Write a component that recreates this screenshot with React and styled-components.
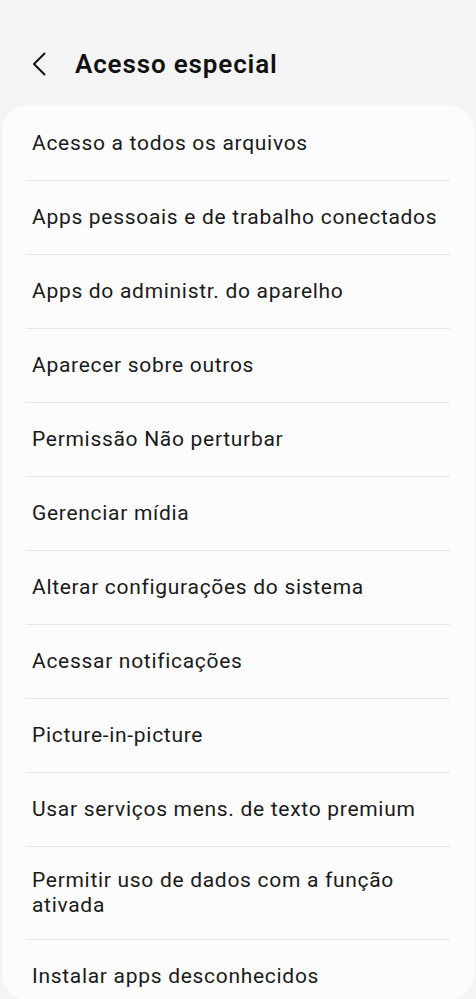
import React from "react";
import styled, { createGlobalStyle } from "styled-components";

const Global = createGlobalStyle`
  html, body { margin: 0; padding: 0; background: #f4f4f4; }
  body { font-family: Roboto, "Noto Sans", Arial, sans-serif; -webkit-font-smoothing: antialiased; }
`;

const Page = styled.div`
  width: 476px;
  height: 999px;
  overflow: hidden;
  background: #f4f4f4;
  display: flex;
  flex-direction: column;
`;

const Header = styled.header`
  height: 105px;
  flex: 0 0 105px;
  display: flex;
  align-items: center;
  padding: 23px 0 0 32px;
  box-sizing: border-box;
  gap: 21px;
`;

const BackButton = styled.button`
  width: 22px;
  height: 26px;
  padding: 0;
  border: none;
  background: none;
  display: flex;
  align-items: center;
  justify-content: flex-start;
  color: #111;
`;

const Title = styled.h1`
  margin: 0;
  font-size: 26px;
  font-weight: 600;
  color: #111;
  letter-spacing: 0.85px;
`;

const Card = styled.ul`
  list-style: none;
  margin: 0 2px;
  padding: 1px 0 0;
  background: #fcfcfc;
  border-radius: 26px;
  height: 895px;
  flex: 0 0 895px;
  box-sizing: border-box;
  overflow: hidden;
`;

const Row = styled.li`
  min-height: 74px;
  box-sizing: border-box;
  padding: ${(p) => (p.$first ? "21px" : "22px")} 24px 21px 30px;
  display: flex;
  align-items: center;
  font-size: 21px;
  line-height: 25px;
  letter-spacing: 0.7px;
  color: #1a1a1a;
  position: relative;
  ${(p) =>
    p.$first
      ? ""
      : `&::before {
    content: "";
    position: absolute;
    top: 0;
    left: 24px;
    right: 24px;
    height: 1px;
    background: #e6e6e6;
  }`}
`;

const items = [
  "Acesso a todos os arquivos",
  "Apps pessoais e de trabalho conectados",
  "Apps do administr. do aparelho",
  "Aparecer sobre outros",
  "Permissão Não perturbar",
  "Gerenciar mídia",
  "Alterar configurações do sistema",
  "Acessar notificações",
  "Picture-in-picture",
  "Usar serviços mens. de texto premium",
  "Permitir uso de dados com a função ativada",
  "Instalar apps desconhecidos",
];

export default function App() {
  return (
    <Page>
      <Global />
      <Header>
        <BackButton aria-label="Voltar">
          <svg width="14" height="24" viewBox="0 0 14 24" fill="none">
            <path d="M12.5 1.5 L2 12 L12.5 22.5" stroke="currentColor" strokeWidth="2" strokeLinecap="round" strokeLinejoin="round" />
          </svg>
        </BackButton>
        <Title>Acesso especial</Title>
      </Header>
      <Card>
        {items.map((t, i) => (
          <Row key={t} $first={i === 0}>
            {t}
          </Row>
        ))}
      </Card>
    </Page>
  );
}
